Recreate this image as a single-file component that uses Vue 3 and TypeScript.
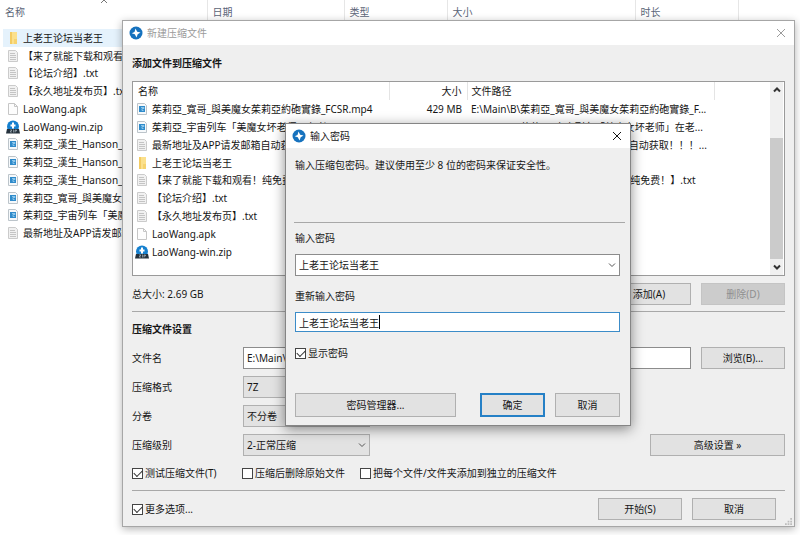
<script setup lang="ts">
import { ref } from 'vue'

type Kind = 'folder' | 'text' | 'blank' | 'zip' | 'video'
interface Entry {
  kind: Kind
  name: string
  size?: string
  path?: string
}

const columns = ['名称', '日期', '类型', '大小', '时长']

const explorer: Entry[] = [
  { kind: 'folder', name: '上老王论坛当老王' },
  { kind: 'text', name: '【来了就能下载和观看！' },
  { kind: 'text', name: '【论坛介绍】.txt' },
  { kind: 'text', name: '【永久地址发布页】.txt' },
  { kind: 'blank', name: 'LaoWang.apk' },
  { kind: 'zip', name: 'LaoWang-win.zip' },
  { kind: 'video', name: '茱莉亞_漢生_Hanson_' },
  { kind: 'video', name: '茱莉亞_漢生_Hanson_' },
  { kind: 'video', name: '茱莉亞_漢生_Hanson_' },
  { kind: 'video', name: '茱莉亞_寬哥_與美魔女' },
  { kind: 'video', name: '茱莉亞_宇宙列车「美魔' },
  { kind: 'text', name: '最新地址及APP请发邮箱' },
]

const files: Entry[] = [
  {
    kind: 'video',
    name: '茱莉亞_寬哥_與美魔女茱莉亞約砲實錄_FCSR.mp4',
    size: '429 MB',
    path: 'E:\\Main\\B\\茱莉亞_寬哥_與美魔女茱莉亞約砲實錄_F...',
  },
  {
    kind: 'video',
    name: '茱莉亞_宇宙列车「美魔女坏老师」在老',
    path: 'E:\\Main\\B\\茱莉亞_宇宙列车「美魔女坏老师」在老...',
  },
  {
    kind: 'text',
    name: '最新地址及APP请发邮箱自动获取',
    path: 'E:\\Main\\B\\最新地址及APP请发邮箱自动获取！！！...',
  },
  { kind: 'folder', name: '上老王论坛当老王' },
  {
    kind: 'text',
    name: '【来了就能下载和观看！纯免费！】.txt',
    path: 'E:\\Main\\B\\【来了就能下载和观看！纯免费！】.txt',
  },
  { kind: 'text', name: '【论坛介绍】.txt' },
  { kind: 'text', name: '【永久地址发布页】.txt' },
  { kind: 'blank', name: 'LaoWang.apk' },
  { kind: 'zip', name: 'LaoWang-win.zip' },
]

const fileName = ref('E:\\Main\\')
const password = ref('上老王论坛当老王')
const confirmation = ref('上老王论坛当老王')
const showPassword = ref(true)
const testArchive = ref(true)
const deleteSources = ref(false)
const separateArchives = ref(false)
const moreOptions = ref(true)
</script>

<template>
  <main class="desktop">
    <svg class="symbols" aria-hidden="true">
      <symbol id="i-folder" viewBox="0 0 14 14">
        <path d="M4 1h7v12H4z" fill="#fbe08c" />
        <path d="M4 1h2v12H4z" fill="#f3cb62" />
        <path d="M8 8h3v5H8z" fill="#f6d370" />
      </symbol>
      <symbol id="i-text" viewBox="0 0 14 14">
        <path d="M2.500 1.500h7l2 2v9h-9z" fill="#f1f1f1" stroke="#cbcbcb" />
        <path d="M4 4.500h5M4 6.500h6M4 8.500h6M4 10.500h6" stroke="#c4c4c4" fill="none" />
      </symbol>
      <symbol id="i-blank" viewBox="0 0 14 14">
        <path d="M2.500 1.500h6l3 3v8h-9z" fill="#fdfdfd" stroke="#c6c6c6" />
        <path d="M8.500 1.500v3h3" fill="none" stroke="#c6c6c6" />
      </symbol>
      <symbol id="i-video" viewBox="0 0 14 14">
        <path d="M2.500 1.500h7l2 2v9h-9z" fill="#f6f9fb" stroke="#bcc4ca" />
        <path d="M4 4h6v6H4z" fill="#2f8bcb" />
        <path d="M6 5.500h3v1H7v2h1.500" fill="none" stroke="#8cc6ea" />
      </symbol>
      <symbol id="i-zip" viewBox="0 0 14 14">
        <circle cx="7" cy="6.500" r="6" fill="#1580cf" />
        <path d="M7 2.500v6M4.500 5.500h5" stroke="#fff" stroke-width="2" />
        <path d="M1 9h12l1 4.500H0z" fill="#25323d" />
        <path d="M4 10h2l-2 2h2M7.500 9.500v3M9 12.500v-2.500h1.500v1H9" fill="none" stroke="#b9c6d0" stroke-width=".6" />
      </symbol>
      <symbol id="i-app" viewBox="0 0 14 14">
        <circle cx="7" cy="7" r="6.500" fill="#1672be" />
        <path d="M6.500 2.500 8.200 5.800 11.500 6.500 8.700 8.200 7.500 11.500 5.800 8.300 2.700 7.300 5.500 5.900z" fill="#fff" />
      </symbol>
      <symbol id="i-close" viewBox="0 0 10 10">
        <path d="M1 1l8 8M9 1l-8 8" fill="none" stroke="currentColor" />
      </symbol>
      <symbol id="i-down" viewBox="0 0 8 8">
        <path d="M1 2.500l3 3 3-3" fill="none" stroke="currentColor" />
      </symbol>
    </svg>

    <table class="explorer">
      <thead>
        <tr>
          <th v-for="(column, i) in columns" :key="column" scope="col">
            {{ column }}
            <svg v-if="i === 0" class="sort" viewBox="0 0 8 4"><path d="M1 3l3-3 3 3" fill="none" stroke="#777" /></svg>
          </th>
          <th></th>
        </tr>
      </thead>
      <tbody>
        <tr v-for="(item, i) in explorer" :key="i" :class="{ selected: i === 0 }">
          <td colspan="5">
            <span class="entry"><svg class="icon"><use :href="'#i-' + item.kind" /></svg>{{ item.name }}</span>
          </td>
        </tr>
      </tbody>
    </table>

    <section class="window archive" aria-label="新建压缩文件">
      <header class="titlebar inactive">
        <svg class="app"><use href="#i-app" /></svg>
        <span class="title">新建压缩文件</span>
        <button class="close" type="button" aria-label="关闭"><svg><use href="#i-close" /></svg></button>
      </header>

      <div class="body">
        <h2>添加文件到压缩文件</h2>
        <div class="list">
          <table class="files">
            <thead>
              <tr>
                <th class="c-name" scope="col">名称</th>
                <th class="c-size" scope="col">大小</th>
                <th class="c-path" scope="col">文件路径</th>
                <th></th>
              </tr>
            </thead>
            <tbody>
              <tr v-for="file in files" :key="file.name">
                <td class="c-name">
                  <span class="entry"><svg class="icon"><use :href="'#i-' + file.kind" /></svg>{{ file.name }}</span>
                </td>
                <td class="c-size">{{ file.size }}</td>
                <td class="c-path">{{ file.path }}</td>
                <td></td>
              </tr>
            </tbody>
          </table>
          <div class="scrollbar">
            <svg class="arrow up"><use href="#i-down" /></svg>
            <div class="track"><div class="thumb"></div></div>
            <svg class="arrow"><use href="#i-down" /></svg>
          </div>
        </div>

        <div class="row total">
          <span class="grow">总大小: 2.69 GB</span>
          <button class="btn" type="button">添加(A)</button>
          <button class="btn" type="button" disabled>删除(D)</button>
        </div>
        <hr />
        <h2>压缩文件设置</h2>

        <div class="form">
          <div class="row">
            <label class="key" for="file-name">文件名</label>
            <input id="file-name" v-model="fileName" class="field grow" type="text" />
            <button class="btn" type="button">浏览(B)...</button>
          </div>
          <div class="row">
            <label class="key" for="format">压缩格式</label>
            <span class="select"><select id="format"><option>7Z</option></select><svg><use href="#i-down" /></svg></span>
          </div>
          <div class="row">
            <label class="key" for="split">分卷</label>
            <span class="select"><select id="split"><option>不分卷</option></select><svg><use href="#i-down" /></svg></span>
          </div>
          <div class="row">
            <label class="key" for="level">压缩级别</label>
            <span class="select"><select id="level"><option>2-正常压缩</option></select><svg><use href="#i-down" /></svg></span>
            <button class="btn advanced" type="button">高级设置 »</button>
          </div>
        </div>

        <div class="checks">
          <label class="check"><input v-model="testArchive" type="checkbox" />测试压缩文件(T)</label>
          <label class="check"><input v-model="deleteSources" type="checkbox" />压缩后删除原始文件</label>
          <label class="check"><input v-model="separateArchives" type="checkbox" />把每个文件/文件夹添加到独立的压缩文件</label>
        </div>
        <hr />
        <footer class="row foot">
          <label class="check grow"><input v-model="moreOptions" type="checkbox" />更多选项...</label>
          <button class="btn" type="button">开始(S)</button>
          <button class="btn" type="button">取消</button>
        </footer>
      </div>
      <svg class="grip" viewBox="0 0 8 8"><path d="M6 0h2v2H6zM3 3h2v2H3zM6 3h2v2H6zM0 6h2v2H0zM3 6h2v2H3zM6 6h2v2H6z" fill="#bdbdbd" /></svg>
    </section>

    <section class="window dialog" role="dialog" aria-label="输入密码">
      <header class="titlebar">
        <svg class="app"><use href="#i-app" /></svg>
        <span class="title">输入密码</span>
        <button class="close" type="button" aria-label="关闭"><svg><use href="#i-close" /></svg></button>
      </header>
      <form class="prompt" @submit.prevent>
        <p>输入压缩包密码。建议使用至少 8 位的密码来保证安全性。</p>
        <hr />
        <label class="caption" for="password">输入密码</label>
        <span class="select combo">
          <select id="password" v-model="password"><option>上老王论坛当老王</option></select>
          <svg><use href="#i-down" /></svg>
        </span>
        <label class="caption again" for="confirm">重新输入密码</label>
        <span class="confirm">
          <input id="confirm" v-model="confirmation" class="field focused" type="text" />
          <i class="caret" :style="{ left: confirmation.length + 'em' }"></i>
        </span>
        <label class="check"><input v-model="showPassword" type="checkbox" />显示密码</label>
        <div class="actions">
          <button class="btn manager" type="button">密码管理器...</button>
          <button class="btn default" type="submit">确定</button>
          <button class="btn" type="button">取消</button>
        </div>
      </form>
    </section>
  </main>
</template>

<style>
body {
  margin: 0;
  background: #fff;
}
</style>

<style scoped>
* {
  box-sizing: border-box;
}
.desktop {
  position: relative;
  min-height: 100vh;
  overflow: hidden;
  background: #fff;
  color: #161616;
  font: 10px/16px "Noto Sans", "Noto Sans CJK SC", sans-serif;
  white-space: nowrap;
}
button,
input,
select {
  font: inherit;
  color: inherit;
  margin: 0;
}
.symbols {
  position: absolute;
  width: 0;
  height: 0;
}
table {
  width: 100%;
  border-collapse: collapse;
  table-layout: fixed;
}
th,
td {
  padding: 0;
  font-weight: 400;
  text-align: left;
}

/* file explorer behind the windows */
.explorer {
  height: 242px;
}
.explorer th {
  position: relative;
  height: 29px;
  padding: 4px 5px;
  vertical-align: top;
  color: #5b6577;
  border-right: 1px solid #e6e6e6;
}
.explorer th:nth-child(1) { width: 207px; }
.explorer th:nth-child(2) { width: 137px; }
.explorer th:nth-child(3) { width: 103px; }
.explorer th:nth-child(4) { width: 188px; }
.explorer th:nth-child(5) { width: 103px; }
.explorer th:last-child { border: 0; }
.sort {
  position: absolute;
  left: 100px;
  top: 0;
  width: 8px;
  height: 4px;
}
.explorer td {
  padding-left: 6px;
  line-height: 16px;
}
.explorer .selected td {
  background: linear-gradient(90deg, #fff 3px, #e5f2fc 3px);
}
.entry {
  display: flex;
  align-items: center;
  gap: 3px;
}
.icon {
  flex: none;
  width: 14px;
  height: 14px;
}

/* windows */
.window {
  position: absolute;
  border: 1px solid #a6a6a6;
  background: #efefef;
  box-shadow: 0 2px 8px rgba(0, 0, 0, 0.3);
}
.archive {
  left: 122px;
  right: 5px;
  top: 20px;
}
.dialog {
  left: 285px;
  right: 169px;
  top: 123px;
  border-color: #858585;
  box-shadow: 0 3px 12px rgba(0, 0, 0, 0.45);
}
.titlebar {
  display: flex;
  align-items: center;
  gap: 4px;
  height: 24px;
  padding: 0 8px 0 6px;
  background: #fff;
}
.inactive {
  color: #9b9b9b;
}
.app {
  width: 14px;
  height: 14px;
}
.title {
  flex: 1;
}
.close {
  display: flex;
  padding: 0;
  border: 0;
  background: none;
}
.close svg {
  width: 10px;
  height: 10px;
}
.body {
  padding: 10px 9px 6px;
}
h2 {
  margin: 0 0 10px;
  font-size: 10px;
  line-height: 16px;
  font-weight: 700;
}
hr {
  margin: 0;
  border: 0;
  border-top: 1px solid #a8a8a8;
}
.list {
  display: flex;
  min-height: 195px;
  padding-right: 1px;
  border: 1px solid #9a9a9a;
  background: #fff;
}
.files {
  flex: 1;
  width: auto;
  height: 179px;
}
.files th {
  height: 18px;
  border-right: 1px solid #e4e4e4;
}
.files th:last-child {
  border: 0;
}
.files .c-name {
  width: 256px;
  padding-left: 2px;
}
.files th.c-name {
  padding-left: 5px;
}
.files .c-size {
  width: 78px;
  padding-right: 5px;
  text-align: right;
}
.files .c-path {
  width: 247px;
  padding-left: 4px;
}
.scrollbar {
  display: flex;
  flex-direction: column;
  align-items: center;
  width: 13px;
  background: #f0f0f0;
  color: #333;
}
.arrow {
  width: 8px;
  height: 8px;
  margin: 4px 0;
  stroke-width: 2;
}
.up {
  transform: rotate(180deg);
}
.track {
  flex: 1;
  display: flex;
  width: 100%;
  padding-top: 40px;
}
.thumb {
  flex: 1;
  background: #cbcbcb;
}
.row {
  display: flex;
  align-items: center;
  gap: 10px;
}
.grow {
  flex: 1;
}
.total {
  margin: 7px 0 6px;
}
.total + hr + h2 {
  margin-top: 9px;
}
.btn {
  width: 84px;
  height: 22px;
  padding: 0;
  border: 1px solid #b0b0b0;
  background: #e2e2e2;
}
.btn:disabled {
  border-color: #c4c4c4;
  background: #cccccc;
  color: #8f8f8f;
}
.form {
  display: grid;
  gap: 7px;
}
.key {
  width: 101px;
}
.field {
  min-width: 0;
  height: 22px;
  padding: 0 3px;
  border: 1px solid #8c8c8c;
  border-radius: 0;
  outline: 0;
  background: #fff;
}
.select {
  display: grid;
  align-items: center;
  width: 127px;
}
.select > * {
  grid-area: 1 / 1;
}
.select select {
  width: 100%;
  height: 22px;
  padding: 0 3px;
  border: 1px solid #b0b0b0;
  border-radius: 0;
  outline: 0;
  background: #e2e2e2;
  appearance: none;
}
.select svg {
  justify-self: end;
  width: 8px;
  height: 8px;
  margin-right: 4px;
  color: #555;
  pointer-events: none;
}
.advanced {
  width: 135px;
  margin-left: auto;
}
.checks {
  display: flex;
  gap: 15px;
  margin: 9px 0;
}
.checks .check:first-child {
  min-width: 95px;
}
.check {
  display: flex;
  align-items: center;
  gap: 2px;
}
.check input {
  display: grid;
  place-items: center;
  width: 11px;
  height: 11px;
  border: 1px solid #444;
  background: #fff;
  appearance: none;
}
.check input:checked::before {
  content: "";
  width: 7px;
  height: 4px;
  margin-top: -2px;
  border: solid #333;
  border-width: 0 0 1px 1px;
  transform: rotate(-45deg);
}
.foot {
  padding: 7px 9px 0 0;
}
.grip {
  position: absolute;
  right: 2px;
  bottom: 1px;
  width: 7px;
  height: 7px;
}

/* password dialog */
.prompt {
  display: flex;
  flex-direction: column;
  padding: 9px 10px 8px 9px;
}
.prompt p {
  min-height: 56px;
  margin: 0 0 9px;
}
.prompt hr {
  margin: 0 -5px 0 -1px;
}
.caption {
  margin: 7px 0 8px;
}
.again {
  margin-top: 12px;
}
.combo {
  width: 100%;
}
.combo select {
  border-color: #8c8c8c;
  background: #fff;
}
.confirm {
  position: relative;
  display: grid;
}
.focused {
  height: 20px;
  border-color: #3c8cc8;
}
.caret {
  position: absolute;
  top: 3px;
  width: 1px;
  height: 14px;
  margin-left: 4px;
  background: #000;
}
.confirm + .check {
  margin-top: 13px;
}
.actions {
  display: flex;
  gap: 10px;
  margin-top: 32px;
}
.actions .btn {
  width: 65px;
  height: 24px;
}
.actions .manager {
  width: 161px;
  margin-right: auto;
}
.actions .default {
  border: 2px solid #2580c6;
}
</style>
